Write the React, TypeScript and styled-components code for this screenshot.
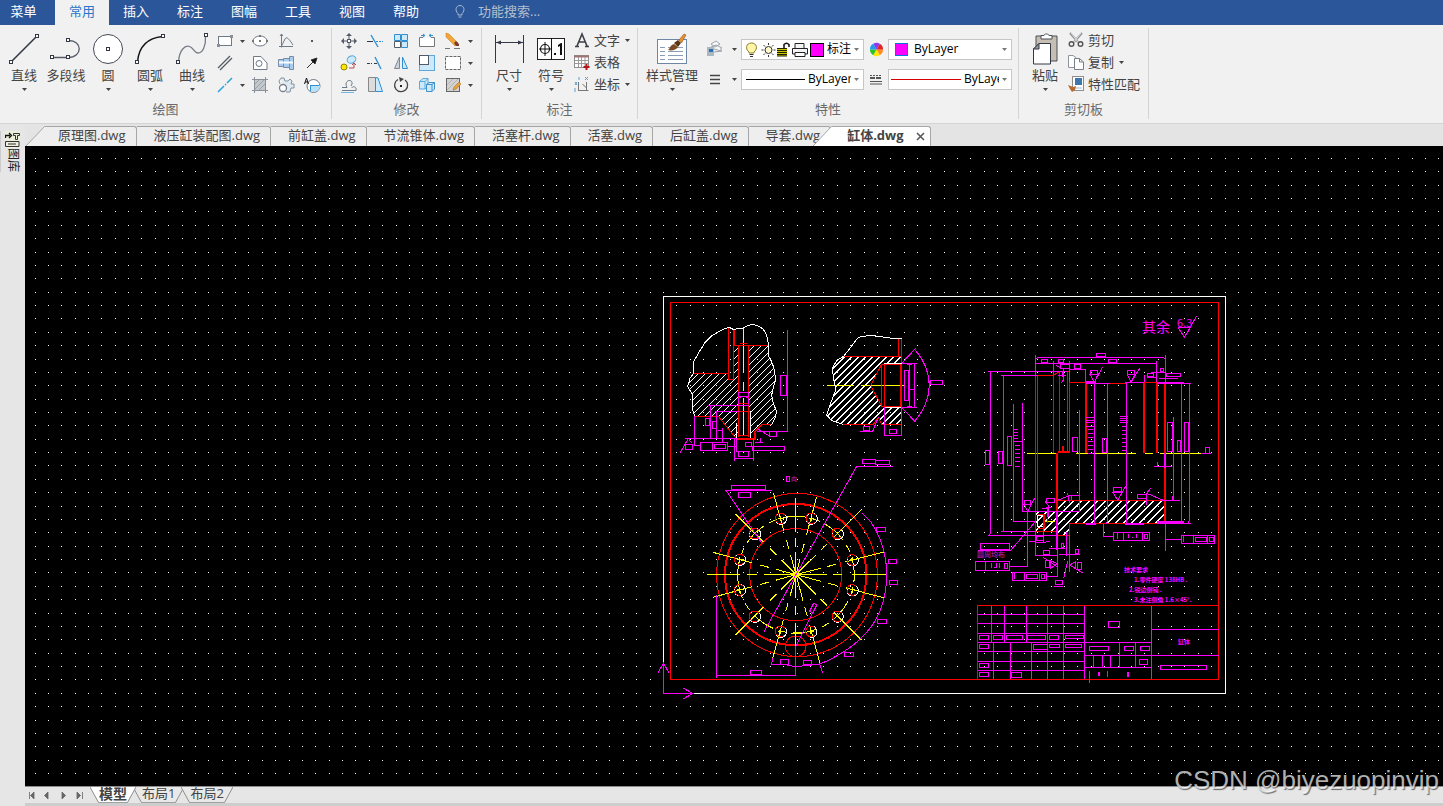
import React from 'react';
import styled, { createGlobalStyle, css } from 'styled-components';

const FONT = '"Open Sans", "Noto Sans CJK SC", sans-serif';
const INK = '#444444';
const STEEL = '#6d7a88';
const SKY = '#cdeafb';
const BLUE = '#2f8fd0';

const GlobalStyle = createGlobalStyle`
  * { box-sizing: border-box; }
  body { margin: 0; background: #e6e6e6; font-family: ${FONT}; font-size: 13px; color: ${INK}; }
  button, input, select { font: inherit; color: inherit; }
`;

const plainButton = css`
  border: 0;
  padding: 0;
  margin: 0;
  background: none;
  cursor: pointer;
  white-space: nowrap;
`;

const Page = styled.div`
  display: flex;
  flex-direction: column;
  min-height: 100vh;
  overflow: hidden;
`;

/* Menu bar */

const MenuBar = styled.nav`
  display: flex;
  align-items: stretch;
  height: 25px;
  flex: none;
  background: #2b579a;
`;

const MenuItem = styled.button<{ $active?: boolean }>`
  ${plainButton}
  width: 54px;
  padding-bottom: 4px;
  color: ${p => (p.$active ? '#2b76c8' : '#ffffff')};
  background: ${p => (p.$active ? '#f1f1f1' : 'transparent')};
  line-height: 20px;
  &:first-child { width: 55px; padding-right: 8px; }
`;

const SearchBox = styled.label`
  display: flex;
  align-items: center;
  gap: 11px;
  margin-left: 20px;
  padding-bottom: 3px;
  color: #b4c2d6;
  input {
    width: 160px;
    border: 0;
    padding: 0;
    background: none;
    outline: 0;
    line-height: 20px;
  }
  input::placeholder { color: #b4bfce; opacity: 1; }
`;

/* Ribbon */

const Ribbon = styled.div`
  display: flex;
  flex: none;
  height: 99px;
  background: #f1f1f1;
  border-bottom: 1px solid #d4d4d4;
`;

const Group = styled.section`
  display: flex;
  flex-direction: column;
  justify-content: space-between;
  margin: 3px 0 4px;
  padding-bottom: 1px;
  border-right: 1px solid #d4d4d4;
`;

const GroupBody = styled.div<{ $pad?: string }>`
  display: flex;
  align-items: flex-start;
  padding: ${p => p.$pad ?? '0'};
`;

const GroupTitle = styled.h2`
  margin: 0;
  font-size: 13px;
  font-weight: 400;
  line-height: 18px;
  text-align: center;
  color: #6a6a6a;
`;

const BigButton = styled.button<{ $width?: number }>`
  ${plainButton}
  display: flex;
  flex-direction: column;
  align-items: center;
  width: ${p => p.$width ?? 42}px;
  margin-top: 3px;
  line-height: 16px;
  > svg:first-child { margin: 2px 0; }
  span { margin-bottom: 5px; }
`;

const ToolGrid = styled.div<{ $columns: string }>`
  display: grid;
  grid-template-columns: ${p => p.$columns};
  grid-auto-rows: 22px;
  margin-top: 2px;
`;

const ToolButton = styled.button`
  ${plainButton}
  display: grid;
  place-items: center;
`;

const SideButton = styled.button`
  ${plainButton}
  display: flex;
  align-items: center;
  height: 22px;
  gap: 3px;
  line-height: 20px;
  svg:last-child { margin-left: 2px; }
`;

const SideStack = styled.div`
  display: flex;
  flex-direction: column;
  align-items: flex-start;
  margin: 1px 0 0 1px;
`;

const PropertyGrid = styled.div`
  display: grid;
  grid-template-columns: 24px 14px 123px 24px 124px;
  grid-auto-rows: 30px;
  align-items: center;
  margin: 6px 6px 0 5px;
`;

const Combo = styled.div<{ $gap?: number }>`
  display: flex;
  align-items: center;
  gap: ${p => p.$gap ?? 3}px;
  height: 21px;
  padding: 0 4px 0 2px;
  overflow: hidden;
  background: #ffffff;
  border: 1px solid #c6c6c6;
  color: #000000;
  > svg { flex: none; }
`;

const ComboSelect = styled.select`
  flex: 1;
  min-width: 0;
  appearance: none;
  border: 0;
  padding: 0;
  background: none;
  font-size: 12px;
  line-height: 18px;
  outline: 0;
  text-overflow: clip;
`;

/* Work area */

const Workspace = styled.div`
  display: flex;
  flex: 1;
`;

const SideRail = styled.aside`
  flex: none;
  width: 25px;
  padding-top: 7px;
  background: #e6e6e6;
`;

const RailButton = styled.button`
  ${plainButton}
  display: flex;
  flex-direction: column;
  align-items: center;
  width: 24px;
  border-left: 1px solid #cccccc;
  font-size: 12px;
  line-height: 14px;
  color: #222222;
  span { writing-mode: vertical-rl; text-orientation: sideways; line-height: 14px; }
`;

const MainColumn = styled.main`
  position: relative;
  display: flex;
  flex: 1;
  flex-direction: column;
  min-width: 0;
`;

const DocTabs = styled.div`
  display: flex;
  height: 22px;
  padding: 2px 0 0 1px;
  background: #e4e4e4;
`;

const DocTab = styled.button`
  ${plainButton}
  height: 20px;
  padding: 0 10px 3px 17px;
  background: #eeeeee;
  border: solid #a6a6a6;
  border-width: 1px 1px 0 0;
  border-top-right-radius: 3px;
  line-height: 16px;
`;

const SlantTab = styled.div<{ $active?: boolean }>`
  display: flex;
  height: 20px;
  margin-left: ${p => (p.$active ? -18 : 0)}px;
  z-index: 1;
  > svg { flex: none; }
  > div {
    display: flex;
    align-items: center;
    padding-left: ${p => (p.$active ? 15 : 13)}px;
    padding-right: ${p => (p.$active ? 5 : 10)}px;
    gap: 12px;
    background: ${p => (p.$active ? '#ffffff' : '#eeeeee')};
    border: solid #a6a6a6;
    border-width: 1px 1px 0 0;
    border-top-right-radius: 3px;
  }
`;

const TabLabel = styled.button<{ $bold?: boolean }>`
  ${plainButton}
  padding-bottom: 3px;
  line-height: 16px;
  font-weight: ${p => (p.$bold ? 700 : 400)};
`;

const CloseButton = styled.button`
  ${plainButton}
  display: flex;
`;

const Canvas = styled.div`
  flex: 1;
  min-height: 0;
  overflow: hidden;
  background: #000000;
  svg { display: block; width: 100%; height: 640px; }
`;

const LayoutBar = styled.div`
  display: flex;
  height: 20px;
  flex: none;
  background: #e6e6e6;
  border-top: 1px solid #8c8c8c;
  border-bottom: 3px solid #cdcdcd;
`;

const NavButtons = styled.div`
  display: flex;
  width: 65px;
  flex: none;
`;

const NavButton = styled.button`
  ${plainButton}
  display: grid;
  place-items: center;
  width: 16px;
  &:first-child { width: 13px; }
`;

const LayoutTab = styled.button<{ $active?: boolean }>`
  ${plainButton}
  display: flex;
  margin-right: -3px;
  z-index: ${p => (p.$active ? 1 : 0)};
  position: relative;
  line-height: 13px;
  font-weight: ${p => (p.$active ? 700 : 400)};
  font-size: ${p => (p.$active ? 14 : 13)}px;
  span { height: 16px; background: ${p => (p.$active ? '#ffffff' : '#e9e9e9')}; border-bottom: 1px solid #a0a0a0; }
`;

const Watermark = styled.div`
  position: absolute;
  right: 4px;
  bottom: 11px;
  font-family: "Liberation Sans", sans-serif;
  font-size: 26px;
  line-height: 30px;
  color: rgba(255, 255, 255, 0.7);
  text-shadow: 1px 1px 1px rgba(0, 0, 0, 0.55);
  pointer-events: none;
`;

/* Icons */

const Caret = ({ light }: { light?: boolean }) => (
  <svg width="5" height="3" viewBox="0 0 5 3" aria-hidden="true">
    <path d="M0 0H5L2.5 3Z" fill={light ? '#777777' : '#444444'} />
  </svg>
);

const node = (x: number, y: number) => (
  <rect key={`${x}-${y}`} x={x - 1.5} y={y - 1.5} width="3" height="3" fill="#ffffff" stroke="#333944" />
);

const bigIcons: Record<string, React.ReactNode> = {
  line: <><path d="M3.5 28.5L28.5 3.5" stroke="#333944" strokeWidth="1.6" />{node(3, 29)}{node(29, 3)}</>,
  polyline: <><path d="M18 7.5C33 7 33 24.5 18 24.5H2" stroke="#555b66" strokeWidth="1.3" />{node(18, 7)}{node(18, 24)}{node(2, 24)}</>,
  circle: <><circle cx="16" cy="16" r="14.5" fill="#ffffff" stroke="#444a55" />{node(16, 16)}</>,
  arc: <><path d="M3.5 28.5C5 14 13 5 28.5 3.5" stroke="#111111" strokeWidth="1.4" />{node(3, 29)}{node(29, 3)}</>,
  spline: <><path d="M2.5 29.5C3 17 9 12 13.500 13.500C18 15 18 20 22 20C27 20 30 12 29.500 3.500" stroke="#777c85" strokeWidth="1.3" />{node(2, 29)}{node(30, 2)}</>,
  dimension: <><path d="M2.500 2V30M30.500 2V30M3 9.500H30" stroke="#333944" /><path d="M3 9.500L8 7.500V11.500ZM30 9.500L25 7.500V11.500Z" fill="#333944" /></>,
  symbol: <><rect x="2.500" y="5.500" width="27" height="21" fill="#ffffff" stroke="#222222" /><path d="M16.500 5V27M10 9V23M4 16H16" stroke="#111111" /><circle cx="10" cy="16" r="4.500" stroke="#111111" strokeWidth="1.200" /><path d="M19 20h2v2h-2ZM23 12l3-2h1v12h-2v-9l-2 1Z" fill="#111111" /></>,
  style: <><rect x="1.500" y="6.500" width="29" height="24" fill="#ffffff" stroke="#6d87a5" /><path d="M4 14.500h5M12 14.500h15M4 18.500h5M12 18.500h15M4 22.500h5M12 22.500h15M4 26.500h5M12 26.500h15" stroke="#8a9db5" /><path d="M12 17C14 16 14 12 18 11L22 14C20 17 16 18 12 17Z" fill="#7a4a22" /><path d="M18 10L22 14L25 10L22 7Z" fill="#5a3515" /><path d="M23 7L28 1L30 2L25.500 10Z" fill="#e8912c" stroke="#8a5218" strokeWidth=".6" /></>,
  paste: <><path d="M7 3H28V28H7Z" fill="#c6beb2" stroke="#4b4f58" /><path d="M12 6V2.500H15C15 .5 20 .5 20 2.500H23V6Z" fill="#ffffff" stroke="#4b4f58" /><path d="M10 10.500H21.500V31H4.500V16Z" fill="#ffffff" stroke="#333944" /><path d="M10 10.500V16H4.500Z" fill="#999999" stroke="#333944" /></>,
};

const smallIcons: Record<string, React.ReactNode> = {
  rectangle: <><rect x="2.500" y="4.500" width="13" height="9" fill="#ffffff" stroke={STEEL} /><path d="M1 12h3v3H1ZM14 3h3v3h-3Z" fill="#8a8f98" /></>,
  ellipse: <><ellipse cx="9" cy="9" rx="7" ry="5" fill="#ffffff" stroke={STEEL} /><path d="M8 3h2v2H8ZM8 8h2v2H8ZM1 8h2v2h-2ZM15 8h2v2h-2Z" fill="#777777" /></>,
  formula: <path d="M4.500 2V15.500M2 14.500H16M3 4l1.500-2L6 4M4.500 14L8 7C10 4 12 7 16 13" stroke={STEEL} />,
  point: <rect x="8" y="8" width="2" height="2" fill="#555555" />,
  parallel: <path d="M2 14L14 2M4 16L16 4" stroke="#555b66" strokeWidth="1.300" />,
  plate: <><path d="M2.500 2.500H10L16 9V15.500H2.500Z" fill="#ffffff" stroke={STEEL} /><circle cx="8" cy="9.500" r="3" stroke={STEEL} /></>,
  shaft: <><path d="M1.500 5.500H6.500V12.500H1.500ZM6.500 4.500H12.500V13.500H6.500ZM12.500 2.500H16.500V15.500H12.500Z" fill="#a8cdf0" stroke="#7a8ca3" /><path d="M2 8.500H16" stroke="#ffffff" strokeWidth="2" /></>,
  arrow: <path d="M4 14L10 8L8 6L14 4L12 10L10 8" fill="#111111" stroke="#333333" />,
  centerline: <path d="M2 16L8 10M9 9L10 8M11 7L16 2" stroke="#29a3dd" strokeWidth="1.500" />,
  hatch: <><rect x="4" y="4" width="10" height="10" fill="#c3c8cd" /><path d="M3.500 1V17M14.500 1V17M1 3.500H17M1 14.500H17" stroke="#8a9098" /><path d="M4 8L8 4M4 13L13 4M8 14L14 8" stroke="#9aa0a6" /></>,
  gear: <><path d="M4 2h3l1 3h3l2-2 2 2-1 3h3v4h-3l-1 4H9" fill="#dfe9f1" stroke="#8592a0" /><circle cx="6" cy="12" r="3.500" fill="#ffffff" stroke="#777f8a" strokeWidth="1.300" /><path d="M3 8L2 5L4 2" stroke="#8592a0" /></>,
  textcircle: <><circle cx="10.500" cy="10" r="6.500" fill="#ffffff" stroke={STEEL} /><path d="M10.500 9H17A6.500 6.500 0 0 1 7 15V9Z" fill="#b5e1fa" /><path d="M7.500 9.500H16.500M7.500 9V15" stroke={BLUE} /><path d="M1.500 8L3.500 2L5.500 8M2 6H5" stroke="#111111" /></>,
  move: <><path d="M9 1L12 4H6ZM9 17L6 14H12ZM1 9L4 6V12ZM17 9L14 12V6Z" fill="#555b66" /><path d="M9 4V7M9 11V14M4 9H7M11 9H14" stroke="#555b66" /><rect x="7.500" y="7.500" width="3" height="3" fill="#ffffff" stroke="#555b66" /></>,
  trim: <><path d="M1 9.500H7" stroke="#333944" /><path d="M5 3L12 15" stroke={BLUE} strokeWidth="1.400" /><path d="M10 9.500H17" stroke={BLUE} strokeDasharray="2 1" /></>,
  array: <><path d="M2.500 2.500H8.500V8.500H2.500ZM9.500 2.500H15.500V8.500H9.500ZM9.500 9.500H15.500V15.500H9.500Z" fill={SKY} stroke={BLUE} /><path d="M2.500 9.500H8.500V15.500H2.500Z" fill="#ffffff" stroke="#555b66" /></>,
  stretch: <><path d="M5 5.500H1.500V14.500H16.500V5.500H13" fill="#ffffff" stroke="#777777" /><path d="M3 3.500H6M12 3.500H15M5 2L7 3.500L5 5M13 2L11 3.500L13 5" stroke={BLUE} /></>,
  erase: <><path d="M2 1L5 2L14 11L11 14L2 5Z" fill="#f1a53b" stroke="#c67a17" strokeWidth=".5" /><path d="M12 9L15 12V14H12L10 11Z" fill="#7a3b2a" /><path d="M1 16.500H6M10 16.500H16" stroke="#777777" /></>,
  copyobj: <><ellipse cx="11.500" cy="5.500" rx="4.500" ry="3.500" transform="rotate(-25 11.500 5.500)" fill={SKY} stroke="#5aa8dc" /><circle cx="4" cy="13" r="3" fill="#ffe600" stroke="#8f8300" /><path d="M9 14H14V9M12 11L14 9L16 11" stroke="#b94b46" /></>,
  extend: <><path d="M1 9.500H6M8 9.500H11" stroke="#333944" strokeDasharray="3 1" /><path d="M9 3L15 15" stroke={BLUE} strokeWidth="1.400" /></>,
  mirror: <><path d="M7.500 3V14.500H2.500Z" fill="#c9d1d9" stroke="#7f8890" /><path d="M10.500 3V14.500H15.500Z" fill={SKY} stroke={BLUE} /></>,
  scale: <><rect x="1.500" y="1.500" width="15" height="15" fill={SKY} stroke="#5aa8dc" /><rect x="1.500" y="1.500" width="9" height="9" fill="#ffffff" stroke="#555b66" /></>,
  select: <rect x="1.500" y="2.500" width="15" height="13" fill="#ffffff" stroke="#666666" strokeDasharray="3 1" />,
  offset: <><path d="M2 14.500H16C17 10 12 10 12 12M2 11.500H7C3 4 13 2 12 8L11 10" stroke="#6d7a88" /><path d="M1 16.500H14" stroke="#72b8e3" /></>,
  chamfer: <><path d="M2.500 1.500H9.500V15.500H2.500Z" fill="#dcdcdc" stroke="#888888" /><path d="M9.500 1.500L12 2L16.500 15.500H9.500Z" fill={SKY} stroke={BLUE} /></>,
  rotate: <><path d="M6 3.500A6.500 6.500 0 1 0 13 4" stroke="#444444" strokeWidth="1.300" /><path d="M7 1L12 3L8 6Z" fill="#444444" /><rect x="8" y="9" width="2" height="2" fill="#222222" /></>,
  solid: <><path d="M1.500 5.500L5 2.500H10V10L7 13H1.500ZM1.500 5.500H7V13M7 5.500L10 2.500" fill={SKY} stroke="#5aa8dc" /><path d="M8.500 8.500L11 6.500H16.500V13L14 15.500H8.500ZM8.500 8.500H14V15.500M14 8.500L16.500 6.500" fill={SKY} stroke="#3e92c9" /></>,
  hatchedit: <><rect x="2.500" y="2.500" width="13" height="13" fill="#d2d2d2" stroke="#666666" /><path d="M3 9L9 3M3 14L14 3M9 15L15 9" stroke="#b0b0b0" /><path d="M9 14L10 11L15 6L17 8L12 13Z" fill="#e6a23c" stroke="#a56a14" strokeWidth=".5" /></>,
  text: <path d="M4 15L9 3L14 15M5.500 11H12.500M2 15.500H6M12 15.500H16" stroke="#3b3f46" strokeWidth="1.600" />,
  table: <><rect x="1.500" y="2.500" width="14" height="12" fill="#ffffff" stroke="#8e8e8e" /><path d="M1 3.500H16" stroke="#a07272" strokeWidth="2" /><path d="M5.500 4V14M8.500 4V14M12 4V14M2 7.500H15M2 10.500H15" stroke="#9b9b9b" /><path d="M13.500 11V17M10.500 14H16.500" stroke="#b3171b" strokeWidth="2" /></>,
  coord: <><path d="M5.500 7V16M5.500 15.500H15.500M9.500 9L13.500 13M13.500 7V16" stroke="#777777" /><path d="M2 7L4 10M4 7L2 10M12 2L15 5M15 2L12 5M2 13V17M6 2V5" stroke="#5b9fd3" /></>,
  layers: <><path d="M5 4L10 1L14 4L9 7ZM5 7L10 5L16 8M8 12L16 11M8 9L15 11V8" fill="#f8f8f8" stroke="#9aa3ad" /><rect x="1" y="7" width="7" height="9" fill="#aab7c4" /><rect x="3" y="9" width="4" height="3" fill="#2f6fb0" /></>,
  weights: <path d="M4 5.500H14M4 9.500H14M4 13.500H14" stroke="#444444" strokeWidth="1.300" />,
  linetype: <><path d="M3 5.500H15" stroke="#555555" strokeDasharray="2 1" /><path d="M3 8H15" stroke="#555555" strokeWidth="2" strokeDasharray="5 1" /><path d="M3 11.500H15M3 14H15" stroke="#555555" /></>,
  cut: <><path d="M3 2L11 11M15 2L7 11" stroke="#8b8f95" strokeWidth="2" /><path d="M4 2L11 11M14 2L7 11" stroke="#ffffff" strokeWidth=".7" /><circle cx="4.500" cy="13" r="2.300" stroke="#555555" strokeWidth="1.400" /><circle cx="13.500" cy="13" r="2.300" stroke="#555555" strokeWidth="1.400" /></>,
  copy: <><path d="M1.500 2.500H6L9.500 5V14.500H1.500Z" fill="#ffffff" stroke="#8e959e" /><path d="M7.500 5.500H12.500L16.500 9V16.500H7.500Z" fill="#ffffff" stroke="#777f8a" /><path d="M12.500 5.500V9H16.500" stroke="#777f8a" /></>,
  match: <><rect x="5.500" y="1.500" width="11" height="14" fill="#ffffff" stroke="#8e8e8e" /><rect x="8" y="3" width="7" height="7" fill="#3e77ad" /><path d="M8 13H15" stroke="#9db5cc" /><path d="M1 10L6 12L9 11L8 15L5 17L3 14Z" fill="#b9692a" /></>,
};

const BigIcon = ({ name, width = 32 }: { name: string; width?: number }) => (
  <svg width={width} height="32" viewBox="0 0 32 32" fill="none" aria-hidden="true">{bigIcons[name]}</svg>
);
const SmallIcon = ({ name }: { name: string }) => (
  <svg width="18" height="18" viewBox="0 0 18 18" fill="none" aria-hidden="true">{smallIcons[name]}</svg>
);

const Tool = ({ name, label }: { name: string; label: string }) => (
  <ToolButton aria-label={label}><SmallIcon name={name} /></ToolButton>
);
const More = ({ label }: { label: string }) => (
  <ToolButton aria-label={label}><Caret /></ToolButton>
);
const Big = ({ icon, label, width, caret = true }: { icon: string; label: string; width?: number; caret?: boolean }) => (
  <BigButton $width={width}><BigIcon name={icon} /><span>{label}</span>{caret && <Caret />}</BigButton>
);
const Side = ({ icon, label, caret }: { icon: string; label: string; caret?: boolean }) => (
  <SideButton><SmallIcon name={icon} /><span>{label}</span>{caret && <Caret />}</SideButton>
);

const wheel = ['#ff8a1e', '#ffe600', '#2fc31f', '#1e9bf0', '#8a3bf0', '#e02424'];
const ColorWheel = () => (
  <svg width="15" height="15" viewBox="-8 -8 16 16" aria-hidden="true" style={{ justifySelf: 'center' }}>
    {wheel.map((c, i) => {
      const a = (i * Math.PI) / 3, b = ((i + 1) * Math.PI) / 3;
      return <path key={c} fill={c} d={`M0 0L${7 * Math.cos(a)} ${7 * Math.sin(a)}A7 7 0 0 1 ${7 * Math.cos(b)} ${7 * Math.sin(b)}Z`} />;
    })}
  </svg>
);

const LayerState = () => (
  <svg width="80" height="17" viewBox="0 0 80 17" fill="none" aria-hidden="true">
    <path d="M5 11C1 8 2 2 7.500 2S14 8 10 11V12H5Z" fill="#fff6a8" stroke="#8a7a2a" />
    <path d="M5.500 13.500H9.500M6 15.500H9" stroke="#333333" />
    <circle cx="24.500" cy="9" r="3.500" fill="#fff9cf" stroke="#333333" />
    <path d="M24.500 2V4M24.500 14V16M17.500 9H19.500M29.500 9H31.500M19.500 4L21 5.500M29.500 4L28 5.500M19.500 14L21 12.500M29.500 14L28 12.500" stroke="#333333" />
    <path d="M40 7V3.500Q42.500 1 45 3.500V6" stroke="#111111" strokeWidth="1.500" />
    <path d="M33 7H43V15H33Z" fill="#c8c800" />
    <path d="M33 7.500H43M33 9.500H43M33 11.500H43M33 13.500H43M33 15H43" stroke="#222200" />
    <path d="M51 7V2.500H60V7M48.500 7.500H63.500V13H48.500Z" fill="#f4f4f4" stroke="#222222" />
    <path d="M51 11.500H61V15.500H51Z" fill="#ffffff" stroke="#222222" />
    <rect x="66.500" y="2.500" width="13" height="13" fill="#ff00ff" stroke="#000000" />
  </svg>
);

/* Drawing */

const MAGENTA = '#ff00ff';
const RED = '#ff0000';
const YELLOW = '#ffff00';
const WHITE = '#ffffff';

const Stroke = styled.path.attrs<{ $bold?: boolean }>({ vectorEffect: 'non-scaling-stroke' })`
  fill: none;
  stroke: ${p => p.color ?? MAGENTA};
  stroke-width: ${p => (p.$bold ? 2 : 1)}px;
`;

const DrawingText = styled.text`
  fill: ${MAGENTA};
  font-family: "Noto Sans CJK SC", sans-serif;
`;

/** One view of the sheet; its paths use three units per screen pixel. */
const View = ({ x, y, children }: { x: number; y: number; children: React.ReactNode }) => (
  <g transform={`translate(${x} ${y}) scale(0.333333)`}>{children}</g>
);

type Box = [number, number, number, number];
const boxes = (list: Box[]) => list.map(([x, y, w, h]) => `M${x} ${y}h${w}v${h}h${-w}Z`).join('');
const rungs = (x: number, w: number, ys: number[]) => ys.map(y => `M${x} ${y}h${w}`).join('');

const Hatch = ({ id, area, box, step }: { id: string; area: string; box: Box; step: number }) => {
  const [x, y, w, h] = box;
  let d = '';
  for (let s = 0; s < w + h; s += step) d += `M${x + s} ${y}l${-h} ${h}`;
  return (
    <>
      <clipPath id={id}><path d={area} /></clipPath>
      <g clipPath={`url(#${id})`}><Stroke color={WHITE} d={d} /></g>
    </>
  );
};

const GRID = 13.371;
const gridDots = (() => {
  let d = '';
  for (let j = 0; j < 48; j++) {
    for (let i = 0; i < 200; i++) {
      d += `M${Math.floor(10 + i * GRID)} ${Math.floor(12.45 + j * GRID)}h1v1h-1Z`;
    }
  }
  return d;
})();

const holes: [number, number][] = [
  [272, 205], [364, 205], [442, 251], [487, 330], [487, 420], [442, 499],
  [363, 544], [272, 544], [194, 499], [149, 420], [149, 328], [194, 251],
];
const rays: [number, number][] = [
  [250, 128], [380, 140], [515, 178], [581, 306], [583, 444], [515, 571],
  [390, 640], [248, 625], [136, 556], [69, 442], [69, 307], [136, 192],
];
const oval = (cx: number, cy: number, rx: number, ry = rx) =>
  `M${cx - rx} ${cy}a${rx} ${ry} 0 1 0 ${2 * rx} 0a${rx} ${ry} 0 1 0 ${-2 * rx} 0`;

const leftBreak = 'M101 250L90 265L83 290L98 315L97 355L104 379';
const rightBreak = 'L327 200L335 215L341 232L344 250L347 268L342 285L335 315L340 340L350 365L345 385L335 404';
const portBreak = 'L515 392L500 375L510 345L527 300L520 260L517 235L530 212L551 199';

const SectionDetails = () => (
  <View x={635} y={144}>
    <Hatch id="hatch-a" step={21} box={[80, 160, 280, 290]}
      area={`${leftBreak}H175L228 445H236V166H221V268H206V250ZM266 166H326${rightBreak}H305L285 425L272 445V364H266Z`} />
    <Hatch id="hatch-b" step={21} box={[496, 196, 232, 210]}
      area={`M551 199H725V220H665L632 286L665 352H725V403H665L655 382L640 403H548${portBreak}Z`} />
    <Stroke color={YELLOW} d="M250 112V250M250 276V303M250 325V437M502 286H582M603 286H731" />
    <Stroke color={RED} d="M101 250H206M206 112V268H221V120M221 166H326M236 166V440M266 166V440M241 162h20M104 379H175L228 445H284V425L305 404H337M236 341H266M236 437H266M236 364H271" />
    <Stroke color={RED} $bold d="M222 120V165M230 446H284V428" />
    <Stroke color={WHITE} d={`M101 250V215L118 185L135 158L155 138L185 120L207 112L220 118L247 115L262 107L278 103L295 108L310 118L320 135L326 165${rightBreak}${leftBreak}M271 364V445M230 400V445`} />
    <Stroke d="M382 120V424H290M145 347H266M151 347V445M166 364H236M170 364V445M104 379V468H121M75 445H232M60 489L85 445L95 460M158 457V481M188 415V457M175 423h14M203 469h26M224 445V512M281 445V512M224 505H281M230 445V486h40M285 457h23M302 445v12M236 325l8-4h15l7 4V341M290 415L328 438M236 325V341" />
    <Stroke d={boxes([[361, 256, 20, 61], [76, 463, 22, 15], [121, 457, 82, 24], [163, 463, 34, 12], [136, 385, 14, 21], [157, 394, 12, 21], [236, 486, 30, 14], [256, 457, 20, 12], [278, 469, 96, 12], [236, 307, 30, 12], [328, 426, 22, 13]])} />

    <Stroke color={RED} d="M551 199H725M725 145V220M716 148V199M665 223L632 286L665 349M665 223H725V349H665ZM674 223V349M548 403H640L655 382L665 403H725" />
    <Stroke color={RED} $bold d="M723 223V349" />
    <Stroke color={WHITE} d={`M551 199L595 142L632 136L690 144L725 145M548 403${portBreak}M671 220H728M671 352H728`} />
    <Stroke d="M725 220H770M725 352H770M764 220V352M725 220L767 175M725 352L767 397M764 178Q806 225 808 286Q806 345 764 394M749 223V349M749 298H764M740 223h15M740 349h15M674 352V436H725V352M600 424H638L655 382" />
    <Stroke d={boxes([[811, 271, 37, 12], [733, 241, 14, 90], [688, 418, 22, 13], [610, 409, 18, 12]])} />
  </View>
);

const FlangeView = () => (
  <View x={665} y={304}>
    <Stroke color={RED} d={oval(321, 375, 241, 245) + oval(317, 374, 138) + oval(317, 589, 31)} />
    <Stroke color={RED} $bold d={oval(317, 374, 212)} />
    <Stroke color={YELLOW} strokeDasharray="24 6 8 6" d={oval(318, 374, 175)} />
    <Stroke color={YELLOW} strokeDasharray="40 9 9 7 30"
      d={rays.map(([x, y]) => `M${x} ${y}L318 374`).join('')} />
    <Stroke color={YELLOW} d="M52 373H150M172 373H200M222 373H410M428 373H455M486 373H592M317 145V245M317 265V290M317 305V445M317 468V495M317 518V618M303 199H335M303 550H335M143 360V388M493 360V388" />
    {holes.map(([x, y], i) => (
      <React.Fragment key={`${x}-${y}`}>
        <Stroke color={WHITE} d={oval(x + 1, y + 1, 17)} />
        <Stroke color={RED} strokeDasharray="12 8" d={oval(x, y, 16)} />
        {i % 3 !== 2 && <Stroke color={YELLOW} d={`M${x - 8} ${y}h17M${x} ${y - 8}v17`} />}
      </React.Fragment>
    ))}
    <Stroke d="M608 49H500L222 545M106 121H245M108 121L215 279M80 435V683M80 676H317V590L380 465M371 460l10 5l-12 24l-10-5ZM517 190L540 212Q590 285 590 373Q590 470 540 535Q490 600 388 643L317 650L290 645L245 643L248 625M388 640L398 668" />
    <Stroke d={boxes([[517, 28, 41, 13], [558, 31, 41, 13], [124, 106, 103, 12], [145, 127, 37, 15], [181, 661, 34, 13], [559, 233, 27, 12], [595, 329, 25, 12], [598, 391, 25, 12], [562, 508, 27, 13], [463, 609, 27, 12], [272, 629, 23, 14], [340, 631, 25, 14], [289, 79, 10, 15]])} />
  </View>
);

const CylinderView = () => (
  <>
    <View x={940} y={334}>
      <Hatch id="hatch-c" step={24} box={[200, -4, 410, 180]} area="M277 61H601V132H314V166H277V154H212V94H277Z" />
      <Stroke color={YELLOW} d="M240 124h30" />
      <Stroke color={RED} d="M277 61H601V132H314V166H277M212 154V94H277M212 154H277V61M218 103H240V145H218M247 115V130" />
      <Stroke color={RED} $bold d="M277 0V94M600 0V132M238 106V142" />
      <Stroke color={WHITE} d="M216 106H235M216 139H235M218 106V139" />
      <Stroke d="M76 0V160l-5 6H277M115 0V154M109 154H212M145 0V124H212M172 0V94H343V0M187 94V259H134M212 124L138 210M40 211H138M61 245v26M79 248v15M94 248v15M104 248v15M88 262h4M178 277v24M223 277v24M148 280v18M245 289H277V166M212 154V229M212 226H277M192 184h14l6 3h24l18-3M236 140V190M253 205H300M305 156V229M314 166V275M282 223H345M235 232L277 260M277 250L257 265V243ZM314 255L332 267V245ZM314 255L355 280M308 244L296 295M268 319h27M389 0V125l-3 6M427 0V122l-3 9M484 0V132M601 132V214M601 178H649M685 166v24M728 166v24M655 169v18M416 132V169H445M475 157v24M533 157v24M457 160v16M490 163v12M502 170v5M514 163v12M625 0V61M649 0V120l-3 8M673 0V120l-3 10M576 130H677" />
      <Stroke $bold d="M277 94V210M362 131h30M480 132h58M576 127h80" />
      <Stroke d={boxes([[46, 190, 88, 20], [31, 245, 103, 26], [118, 252, 11, 13], [142, 277, 103, 24], [184, 283, 34, 12], [229, 283, 10, 12], [215, 169, 22, 12], [236, 211, 18, 12], [289, 190, 8, 12], [331, 208, 10, 12], [241, 241, 13, 22], [337, 247, 13, 22], [271, 301, 22, 13], [649, 166, 99, 24], [691, 172, 34, 12], [734, 172, 11, 12], [445, 157, 108, 24], [538, 163, 10, 12]])} />
    </View>
    <View x={940} y={164}>
      <Stroke color={YELLOW} d="M186 430H276M333 430H512M540 430H563M585 430H708" />
      <Stroke color={RED} d="M212 604V196H266M218 196V604M266 190V430M284 184V430M308 184V430M314 184V430M266 196L284 184H314M314 217H362M435 220H485M536 217H600" />
      <Stroke color={RED} $bold d="M363 217V430M536 217V430M576 217V430M600 220V512M276 430V510M278 426H311M293 408V427" />
      <Stroke d="M212 135V200M212 145L222 142H592L601 145M601 135V222M212 160H575M266 153V196M314 153V217M575 153V217M273 166l15 8M314 178H362V217M295 178V210l-6 8M280 196h22M70 184H310M76 184V510M109 196H218M115 196V510M145 282V510M172 279V510M145 394H172M344 300V510M389 220V510M427 222V510M362 220H435M480 217H536M484 220V510M376 195H398L388 217ZM388 217L412 172M487 195H509L498 217ZM498 217L524 175M539 217V195M545 202H575M558 187H600M582 205H640M576 222H677M625 321V571M649 222V510M673 220V510M708 430h30M568 469H620M579 457v12M445 549H470L458 571ZM458 571L482 529M277 571L315 556H343M320 556V571M308 549l5 30M545 550L595 571H645M545 585V550l12-15M623 558v13M172 583h28M178 585L188 604L210 563M240 575l12 14M232 597l25-6M640 53H676L658 82ZM658 82L695 18" />
      <Stroke $bold d="M600 430V475M362 217H392M576 219H656M250 592V620M295 184V200" />
      <Stroke d={rungs(148, 11, [358, 367, 376, 385]) + rungs(150, 15, [406, 418, 430, 442, 454, 469]) + rungs(364, 22, [322, 331, 337, 349]) + rungs(370, 14, [358, 370, 382, 394, 406, 418, 430]) + rungs(466, 23, [319, 325, 331, 337]) + rungs(472, 12, [349, 361, 373, 385, 397, 409, 421])} />
      <Stroke d={boxes([[394, 130, 28, 11], [229, 148, 19, 11], [280, 148, 16, 11], [430, 148, 25, 11], [286, 163, 28, 13], [328, 163, 19, 13], [127, 379, 14, 88], [61, 421, 13, 43], [100, 424, 13, 37], [322, 382, 16, 43], [412, 385, 13, 43], [376, 181, 22, 14], [487, 181, 22, 14], [547, 190, 19, 10], [588, 175, 8, 10], [604, 190, 43, 10], [607, 337, 16, 88], [637, 391, 11, 34], [658, 337, 14, 88], [721, 412, 13, 18], [445, 532, 25, 13], [517, 553, 28, 12], [178, 571, 19, 12], [244, 565, 25, 13]])} />
    </View>
  </>
);

const TitleBlock = () => (
  <View x={940} y={334}>
    <Stroke d="M359 376V598M560 376V598M38 403H359M38 430H359M38 460H359M38 487H560M38 514H359M38 544H359M38 571H359M80 376V487M118 376V487M184 376V487M247 376V598M295 376V598M86 487V598M136 487V598M199 487V598M560 448H761M359 526H761M359 562H560M463 487V562M511 487V562M386 526V562M413 526V562M436 526V562M374 573V608M427 573v18" />
    <Stroke $bold d="M402 576v12M488 576v15" />
    <Stroke d={boxes([[43, 466, 28, 12], [85, 466, 28, 12], [124, 466, 49, 12], [187, 466, 56, 12], [253, 466, 28, 12], [301, 466, 56, 9], [43, 493, 28, 12], [205, 493, 43, 15], [253, 493, 31, 11], [301, 493, 49, 9], [43, 550, 28, 12], [43, 577, 28, 12], [139, 577, 31, 15], [430, 424, 34, 18], [373, 499, 58, 12], [478, 499, 28, 12], [526, 499, 28, 12], [523, 538, 24, 15], [586, 556, 139, 12]])} />
    <Stroke color={RED} d="M38 598V376H761" />
  </View>
);

const Drawing = () => (
  <svg role="img" aria-label="缸体.dwg" shapeRendering="crispEdges">
    <path d={gridDots} fill="#ffffff" />
    <Stroke color={WHITE} d="M638.5 518V150.500H1200.500V547.500H668" />
    <Stroke color={RED} d="M645.500 156.500H1193.500V533.500H645.500Z" />
    <SectionDetails />
    <FlangeView />
    <CylinderView />
    <TitleBlock />
    <Stroke d="M638.500 518V547.500H668M633 527L638.500 517L644 527M658 542L668 547.500L658 553" />
    <DrawingText x="1117" y="186" fontSize="14">其余</DrawingText>
    <DrawingText x="1152" y="181" fontSize="11">6.3</DrawingText>
    <g fontWeight="700">
      <DrawingText x="1099" y="426" fontSize="6">技术要求</DrawingText>
      <DrawingText x="1109" y="436" fontSize="6">1.零件硬度 138HB .</DrawingText>
      <DrawingText x="1104" y="446" fontSize="6">2.锐边倒钝 .</DrawingText>
      <DrawingText x="1109" y="456" fontSize="6">3.未注倒角 1.6×45°.</DrawingText>
      <DrawingText x="1153" y="498" fontSize="6">缸体</DrawingText>
      <DrawingText x="952" y="411" fontSize="7" style={{ fill: '#9a1a9a' }}>圆周均布</DrawingText>
      <DrawingText x="766" y="335" fontSize="6" style={{ fill: '#9a1a9a' }}>向</DrawingText>
    </g>
  </svg>
);

/* Tabs */

const documents = ['液压缸装配图.dwg', '前缸盖.dwg', '节流锥体.dwg', '活塞杆.dwg', '活塞.dwg', '后缸盖.dwg', '导套.dwg'];

const Slant = ({ fill }: { fill: string }) => (
  <svg width="19" height="20" viewBox="0 0 19 20" aria-hidden="true">
    <path d="M0 20L19 0V20Z" fill={fill} /><path d="M0 20L18.500 .5H19" stroke="#a6a6a6" fill="none" />
  </svg>
);

const LayoutEdge = ({ fill, right }: { fill: string; right?: boolean }) => (
  <svg width="9" height="16" viewBox="0 0 9 16" aria-hidden="true">
    <path d={right ? 'M0 0H9L0 15Z' : 'M0 0H9V15Z'} fill={fill} />
    <path d={right ? 'M9 0L.5 15.500H0' : 'M0 0L8.500 15.500H9'} stroke="#8f8f8f" fill="none" />
  </svg>
);

const Sheet = ({ label, active }: { label: string; active?: boolean }) => {
  const fill = active ? '#ffffff' : '#e9e9e9';
  return (
    <LayoutTab $active={active}>
      <LayoutEdge fill={fill} /><span>{label}</span><LayoutEdge fill={fill} right />
    </LayoutTab>
  );
};

const navShapes: [string, string][] = [
  ['首页', 'M2.500 1V8M7 1V8L3.500 4.500Z'],
  ['上一页', 'M6 1V8L2.500 4.500Z'],
  ['下一页', 'M4 1V8L7.500 4.500Z'],
  ['末页', 'M8.500 1V8M3 1V8L6.500 4.500Z'],
];

export default function App() {
  return (
    <Page>
      <GlobalStyle />
      <MenuBar>
        {['菜单', '常用', '插入', '标注', '图幅', '工具', '视图', '帮助'].map(m => (
          <MenuItem key={m} $active={m === '常用'}>{m}</MenuItem>
        ))}
        <SearchBox>
          <svg width="14" height="14" viewBox="0 0 14 14" fill="none" aria-hidden="true">
            <path d="M5 9.500C1.500 6.500 3 1.500 7 1.500S12.500 6.500 9 9.500V11H5ZM5.500 13H8.500" stroke="#a9b9d0" />
          </svg>
          <input aria-label="功能搜索" placeholder="功能搜索..." />
        </SearchBox>
      </MenuBar>

      <Ribbon>
        <Group>
          <GroupBody $pad="0 6px 0 3px">
            <Big icon="line" label="直线" />
            <Big icon="polyline" label="多段线" caret={false} />
            <Big icon="circle" label="圆" />
            <Big icon="arc" label="圆弧" />
            <Big icon="spline" label="曲线" />
            <ToolGrid $columns="24px 10px 26px 26px 26px">
              <Tool name="rectangle" label="矩形" /><More label="矩形选项" /><Tool name="ellipse" label="椭圆" /><Tool name="formula" label="公式曲线" /><Tool name="point" label="点" />
              <Tool name="parallel" label="平行线" /><span /><Tool name="plate" label="孔" /><Tool name="shaft" label="轴" /><Tool name="arrow" label="箭头" />
              <Tool name="centerline" label="中心线" /><More label="中心线选项" /><Tool name="hatch" label="剖面线" /><Tool name="gear" label="齿轮" /><Tool name="textcircle" label="局部放大" />
            </ToolGrid>
          </GroupBody>
          <GroupTitle>绘图</GroupTitle>
        </Group>

        <Group>
          <GroupBody $pad="0 6px 0 4px">
            <ToolGrid $columns="repeat(5, 26px) 9px">
              <Tool name="move" label="平移" /><Tool name="trim" label="裁剪" /><Tool name="array" label="阵列" /><Tool name="stretch" label="拉伸" /><Tool name="erase" label="删除" /><More label="删除选项" />
              <Tool name="copyobj" label="平移复制" /><Tool name="extend" label="延伸" /><Tool name="mirror" label="镜像" /><Tool name="scale" label="缩放" /><Tool name="select" label="打断" /><More label="打断选项" />
              <Tool name="offset" label="等距线" /><Tool name="chamfer" label="过渡" /><Tool name="rotate" label="旋转" /><Tool name="solid" label="分解" /><Tool name="hatchedit" label="剖面编辑" /><More label="编辑选项" />
            </ToolGrid>
          </GroupBody>
          <GroupTitle>修改</GroupTitle>
        </Group>

        <Group>
          <GroupBody $pad="0 7px 0 6px">
            <Big icon="dimension" label="尺寸" />
            <Big icon="symbol" label="符号" />
            <SideStack>
              <Side icon="text" label="文字" caret />
              <Side icon="table" label="表格" />
              <Side icon="coord" label="坐标" caret />
            </SideStack>
          </GroupBody>
          <GroupTitle>标注</GroupTitle>
        </Group>

        <Group>
          <GroupBody $pad="0 0 0 8px">
            <Big icon="style" label="样式管理" width={52} />
            <PropertyGrid>
              <Tool name="layers" label="图层" /><More label="图层选项" />
              <Combo>
                <LayerState />
                <ComboSelect aria-label="当前图层"><option>标注线层</option></ComboSelect>
                <Caret light />
              </Combo>
              <ColorWheel />
              <Combo $gap={6}>
                <svg width="17" height="13" aria-hidden="true"><rect x="4.500" y=".5" width="12" height="12" fill="#ff00ff" stroke="#0078d7" /></svg>
                <ComboSelect aria-label="颜色"><option>ByLayer</option></ComboSelect>
                <Caret light />
              </Combo>
              <Tool name="weights" label="线宽" /><More label="线宽选项" />
              <Combo $gap={3}>
                <svg width="61" height="1" aria-hidden="true"><path d="M2 0H61V1H2Z" fill="#000000" /></svg>
                <ComboSelect aria-label="线宽"><option>ByLayer</option></ComboSelect>
                <Caret light />
              </Combo>
              <Tool name="linetype" label="线型" />
              <Combo $gap={3}>
                <svg width="70" height="1" aria-hidden="true"><path d="M0 0H70V1H0Z" fill="#d80000" /></svg>
                <ComboSelect aria-label="线型"><option>ByLayer</option></ComboSelect>
                <Caret light />
              </Combo>
            </PropertyGrid>
          </GroupBody>
          <GroupTitle>特性</GroupTitle>
        </Group>

        <Group>
          <GroupBody $pad="0 8px 0 5px">
            <Big icon="paste" label="粘贴" />
            <SideStack>
              <Side icon="cut" label="剪切" />
              <Side icon="copy" label="复制" caret />
              <Side icon="match" label="特性匹配" />
            </SideStack>
          </GroupBody>
          <GroupTitle>剪切板</GroupTitle>
        </Group>
      </Ribbon>

      <Workspace>
        <SideRail>
          <RailButton>
            <svg width="15" height="17" viewBox="0 0 15 17" fill="none" aria-hidden="true">
              <rect width="15" height="17" fill="#eeeedd" />
              <path d="M.5 7V4.500H5M4 2L6.500 4.500L4 7" stroke="#111111" strokeWidth="1.300" />
              <path d="M8.500 2.500H14.500V4.500H12.500V8.500H10.500V4.500H8.500ZM.5 10.500H14V15.500H.5ZM3 13H11" stroke="#333333" />
            </svg>
            <span>图库</span>
          </RailButton>
        </SideRail>
        <MainColumn>
          <DocTabs>
            <SlantTab>
              <Slant fill="#eeeeee" />
              <div><TabLabel>原理图.dwg</TabLabel></div>
            </SlantTab>
            {documents.map(name => <DocTab key={name}>{name}</DocTab>)}
            <SlantTab $active>
              <Slant fill="#ffffff" />
              <div>
                <TabLabel $bold>缸体.dwg</TabLabel>
                <CloseButton aria-label="关闭">
                  <svg width="9" height="9" viewBox="0 0 9 9" aria-hidden="true"><path d="M1 1L8 8M8 1L1 8" stroke="#555555" strokeWidth="1.500" /></svg>
                </CloseButton>
              </div>
            </SlantTab>
          </DocTabs>
          <Canvas><Drawing /></Canvas>
          <LayoutBar>
            <NavButtons>
              {navShapes.map(([label, d]) => (
                <NavButton key={label} aria-label={label}>
                  <svg width="9" height="9" viewBox="0 0 9 9" aria-hidden="true"><path d={d} fill="#666666" stroke="#666666" strokeWidth=".8" /></svg>
                </NavButton>
              ))}
            </NavButtons>
            <Sheet label="模型" active />
            <Sheet label="布局1" />
            <Sheet label="布局2" />
          </LayoutBar>
          <Watermark>CSDN @biyezuopinvip</Watermark>
        </MainColumn>
      </Workspace>
    </Page>
  );
}
